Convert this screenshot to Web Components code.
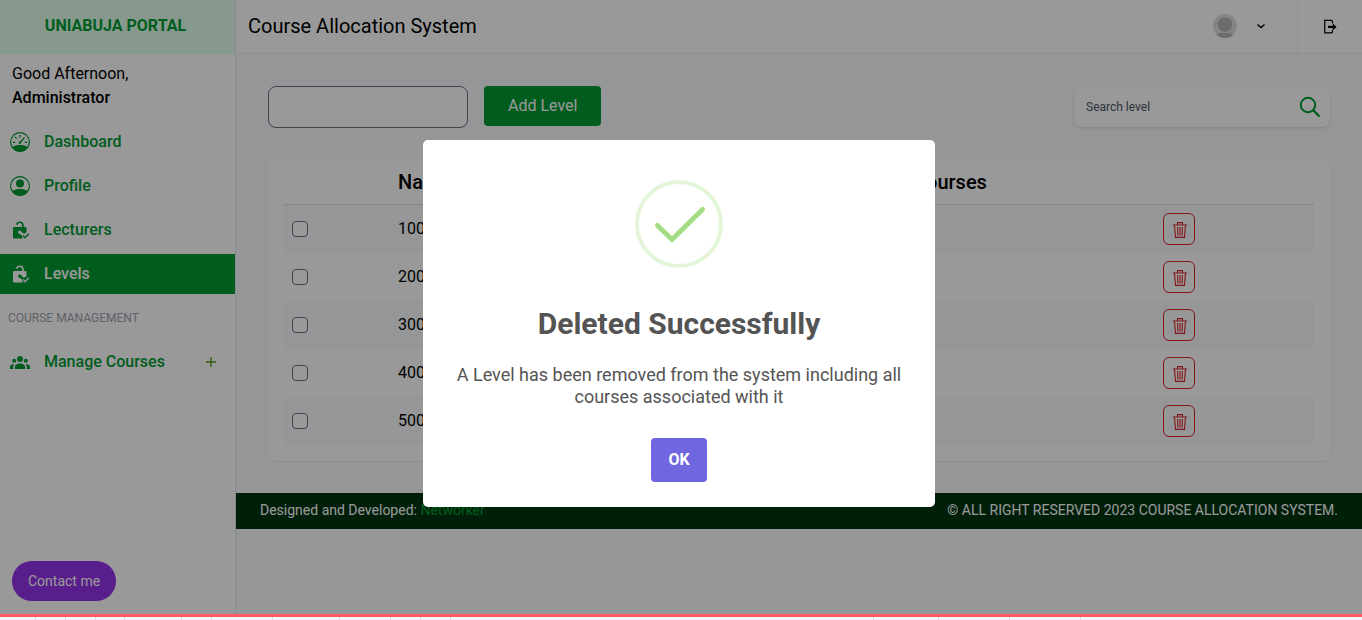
<!DOCTYPE html>
<html lang="en">
<head>
<meta charset="utf-8">
<title>Course Allocation System</title>
<style>
body { margin: 0; font-family: Roboto, "Liberation Sans", sans-serif; font-size: 16px; line-height: 24px; color: #000; }
</style>
</head>
<body>
<portal-app></portal-app>
<script>
const define = (name, html, setup) => {
  const template = document.createElement('template');
  template.innerHTML = `<style>*{box-sizing:border-box}:host{display:block;box-sizing:border-box}button,input{font:inherit}</style>${html}`;
  customElements.define(name, class extends HTMLElement {
    connectedCallback() {
      if (this.shadowRoot) return;
      this.attachShadow({ mode: 'open' }).append(template.content.cloneNode(true));
      if (setup) setup(this, this.shadowRoot);
    }
  });
};

const icons = {
  dashboard: ['0 0 20 20', '<circle cx="10" cy="10" r="9.4" fill="none" stroke="currentColor" stroke-width="1.2"/><path d="M2 15.200C4.500 13.600 7 13 10 13s5.500.6 8 2.200A9.500 9.500 0 0 1 10 19.800a9.500 9.500 0 0 1-8-4.600Z"/><path d="M10 3v2.400M5 5l1.600 1.600M2.800 10.300h2.500M14.700 10.300h2.500M9.800 11 14.600 5.400" fill="none" stroke="currentColor" stroke-width="1.300"/><circle cx="9.800" cy="10.700" r="1.200"/>'],
  profile: ['0 0 20 20', '<circle cx="10" cy="10" r="9.400" fill="none" stroke="currentColor" stroke-width="1.200"/><circle cx="10" cy="7.500" r="4"/><path d="M2 15.200C4.500 13.600 7 13 10 13s5.500.6 8 2.200A9.500 9.500 0 0 1 10 19.800a9.500 9.500 0 0 1-8-4.600Z"/>'],
  lock: ['0 0 20 20', '<path d="M6.700 4.700A3.200 3.200 0 0 1 13 5.200V7.500" fill="none" stroke="currentColor" stroke-width="1.600"/><path d="M4.300 7h10.900a1.300 1.300 0 0 1 1.300 1.300v3.900l-2.500 1.500-2.400-1.700a1.800 1.800 0 1 0-1.700 2l1.900 1.300.2 1 .8 2.200H4.300A1.300 1.300 0 0 1 3 17.200V8.300A1.300 1.300 0 0 1 4.300 7Z"/><path d="m13 15.500 2 2.200 3.800-4" fill="none" stroke="currentColor" stroke-width="1.500"/>'],
  people: ['0 0 20 20', '<circle cx="10" cy="7" r="3"/><circle cx="4.200" cy="8.800" r="2"/><circle cx="15.800" cy="8.800" r="2"/><path d="M4.800 17v-1.700c0-2.700 2.300-3.900 5.200-3.900s5.200 1.200 5.200 3.900V17ZM0 17v-1.800c0-2 1.700-3.200 4.500-3.200-.9.900-1.300 2-1.300 3.300V17Zm20 0v-1.800c0-2-1.700-3.200-4.500-3.200.9.900 1.300 2 1.300 3.300V17Z"/>'],
  plus: ['0 0 20 20', '<path d="M10 5v10M5 10h10" fill="none" stroke="currentColor" stroke-width="1.300"/>'],
  avatar: ['0 0 24 24', '<defs><clipPath id="disc"><circle cx="12" cy="12" r="12"/></clipPath></defs><g clip-path="url(#disc)"><path fill="#dedede" d="M0 0h24v24H0z"/><circle cx="12" cy="10.500" r="7.300" fill="#b5b5b5"/><path fill="#b5b5b5" d="M3 24v-3c2-1.700 5-2 9-2s7 .3 9 2v3Z"/></g>'],
  chevron: ['0 0 12 12', '<path d="m2.500 4.500 3.500 3 3.500-3" fill="none" stroke="currentColor" stroke-width="1.400"/>'],
  logout: ['0 0 16 16', '<path d="M10.500 4.500V2.300l-1-.9H2.700v12.400h6.800l1-.9v-2.200" fill="none" stroke="currentColor" stroke-width="1.200"/><path d="M6 6.700h4.800V4.500L14.600 7.900l-3.800 3.300V9.100H6Z"/>'],
  search: ['0 0 24 24', '<circle cx="10" cy="10" r="7.200" fill="none" stroke="currentColor" stroke-width="2"/><path d="m15 15 6.500 6.500" stroke="currentColor" stroke-width="2.400"/>'],
  trash: ['0 0 14 16', '<path d="M0 3h14M4.500 3V.6h5V3M1.500 3.300l1 12.100h9l1-12.100M4.600 5l.3 8.500M7 5v8.500M9.400 5l-.3 8.500" fill="none" stroke="currentColor" stroke-width="1.100"/>']
};

define('app-icon', `<style>:host{flex:none;width:20px;height:20px}svg{display:block;width:100%;height:100%;fill:currentColor}</style><svg aria-hidden="true"></svg>`,
  (host, root) => {
    const [box, art] = icons[host.getAttribute('name')];
    const svg = root.querySelector('svg');
    svg.setAttribute('viewBox', box);
    svg.innerHTML = art;
  });

define('nav-link', `<style>
a{display:flex;align-items:center;gap:14px;height:40px;padding:0 14px 0 10px;color:#009c33;text-decoration:none;font-weight:500;line-height:24px}
span{flex:1;padding-bottom:1px}
:host([active]) a{background:#009c33;color:#fff}
</style><a href="#"><span><slot></slot></span><slot name="end"></slot></a>`,
  (host, root) => {
    const link = root.querySelector('a');
    const icon = document.createElement('app-icon');
    icon.setAttribute('name', host.getAttribute('icon'));
    link.prepend(icon);
    if (host.hasAttribute('active')) link.setAttribute('aria-current', 'page');
  });

define('app-sidebar', `<style>
:host{display:flex;flex-direction:column;background:#fff;border-right:1px solid #e2e8f0}
.brand{height:54px;display:grid;place-items:center;padding:0 4px 2px 0;background:#e0ffea;color:#009c33;font-weight:700}
.greet{padding:8px 12px 12px}
.greet strong{display:block;font-weight:500}
nav{display:grid;gap:4px}
h2{margin:0;height:40px;padding:0 8px;font-size:12px;line-height:40px;font-weight:400;color:#9ca3af}
button{margin:auto auto 13px 12px;height:40px;padding:0 16px;border:0;border-radius:20px;background:#9333ea;color:#fff;font-size:14px}
nav-link app-icon{color:#4a9c1a}
</style>
<div class="brand">UNIABUJA PORTAL</div>
<div class="greet">Good Afternoon,<strong>Administrator</strong></div>
<nav>
<nav-link icon="dashboard">Dashboard</nav-link>
<nav-link icon="profile">Profile</nav-link>
<nav-link icon="lock">Lecturers</nav-link>
<nav-link icon="lock" active>Levels</nav-link>
<h2>COURSE MANAGEMENT</h2>
<nav-link icon="people">Manage Courses<app-icon slot="end" name="plus"></app-icon></nav-link>
</nav>
<button type="button">Contact me</button>`);

define('app-header', `<style>
:host{display:flex;height:54px;background:#fff;border-bottom:1px solid #eef0f3}
h1{flex:1;margin:0;padding-left:12px;font-size:20px;font-weight:400;line-height:52px}
button{border:0;background:none;padding:0;display:flex;align-items:center;height:52px;color:#000}
.user{gap:18px;padding-right:30px}
.out{width:65px;justify-content:center;border-left:1px solid #eef0f3;height:53px}
.face{width:24px;height:24px}
.small{width:12px;height:12px}
.exit{width:16px;height:16px}
</style>
<h1>Course Allocation System</h1>
<button class="user" type="button" aria-label="Account"><app-icon class="face" name="avatar"></app-icon><app-icon class="small" name="chevron"></app-icon></button>
<button class="out" type="button" aria-label="Log out"><app-icon class="exit" name="logout"></app-icon></button>`);

define('level-tools', `<style>
:host{display:flex;justify-content:space-between;align-items:center;height:42px}
form{display:flex;gap:16px;align-items:flex-start}
.name{width:200px;height:42px;border:1px solid #6b7280;border-radius:8px;padding:0 12px;background:#fff}
.add{height:40px;padding:0 24px;border:0;border-radius:4px;background:#009c33;color:#fff}
.search{display:flex;align-items:center;width:256px;height:40px;border-radius:8px;background:#fff;box-shadow:0 1px 3px rgba(0,0,0,.12);padding:0 8px 0 12px}
.search input{flex:1;min-width:0;border:0;padding:0;background:none;font-size:12px}
.search input::placeholder{color:#4b5563;opacity:1}
.search app-icon{width:24px;height:24px;color:#009c33}
</style>
<form><input class="name" type="text" aria-label="Level name"><button class="add" type="button">Add Level</button></form>
<label class="search"><input type="text" placeholder="Search level" aria-label="Search level"><app-icon name="search"></app-icon></label>`);

define('level-table', `<style>
:host{background:#fff;border-radius:8px;padding:0 16px 16px;box-shadow:0 1px 2px rgba(0,0,0,.05)}
table{width:100%;border-collapse:separate;border-spacing:0;table-layout:fixed}
th{height:45px;padding:0 8px;border-bottom:1px solid #d9dfe7;font-size:20px;font-weight:500;text-align:left}
td{height:48px;padding:0 8px;vertical-align:middle}
tbody tr:nth-child(odd){background:#f8fafc}
.check{width:106px}.count{width:250px}.act{width:159px}
input{appearance:none;display:block;width:16px;height:16px;margin:0;border:1px solid #6b7280;border-radius:4px;background:#fff}
button{display:grid;place-items:center;width:32px;height:32px;padding:2px 0 0 2px;border:1px solid #dc2626;border-radius:6px;background:transparent;color:#dc2626}
button app-icon{width:14px;height:16px}
</style>
<table><thead><tr><th class="check"></th><th>Name</th><th class="count">Courses</th><th class="act"></th></tr></thead><tbody></tbody></table>`,
  (host, root) => {
    root.querySelector('tbody').innerHTML = [100, 200, 300, 400, 500].map(n =>
      `<tr><td><input type="checkbox" aria-label="Select ${n}"></td><td>${n}</td><td></td><td><button type="button" aria-label="Delete ${n}"><app-icon name="trash"></app-icon></button></td></tr>`).join('');
  });

define('app-footer', `<style>
:host{display:flex;justify-content:space-between;align-items:center;height:36px;padding:0 24px 2px;background:#003410;color:#fff;font-size:14px;line-height:20px}
a{color:#009c33;text-decoration:none}
</style><span>Designed and Developed: <a href="#">Networker</a></span><span>© ALL RIGHT RESERVED 2023 COURSE ALLOCATION SYSTEM.</span>`);

define('success-dialog', `<style>
:host{display:flex;justify-content:center;align-items:flex-start;padding:140px 4px 0 0;background:rgba(0,0,0,.4)}
dialog{position:static;margin:0;width:512px;max-width:100%;padding:40px 24px 25px;border:0;border-radius:5px;background:#fff;color:#545454;text-align:center}
svg{display:block;margin:0 auto 38px;width:88px;height:88px}
h2{margin:0 0 22px;font-size:30px;line-height:36px;font-weight:700}
p{margin:0 0 30px;font-size:18px;line-height:22px}
button{height:44px;padding:0 17px;border:0;border-radius:4px;background:#7066e0;color:#fff;font-weight:700;display:block;margin:0 auto}
</style>
<dialog open aria-labelledby="title">
<svg viewBox="0 0 88 88" fill="none" aria-hidden="true"><circle cx="44" cy="44" r="42" stroke="#e4f6da" stroke-width="4"/><path d="M22.500 45.500 37 59.500 67.500 29.500" stroke="#a5dc86" stroke-width="5" stroke-linecap="round" stroke-linejoin="round"/></svg>
<h2 id="title">Deleted Successfully</h2>
<p>A Level has been removed from the system including all courses associated with it</p>
<button type="button">OK</button>
</dialog>`);

define('bottom-strip', `<style>
:host{display:grid;grid-template-columns:36px 30px 30px 29px 57px 30px 61px 67px 51px 30px 30px 1fr 65px 71px 71px 281px;height:6px;border-top:3px solid #ff5a65;background:#f8f8f8}
i{border-right:1px solid #ddd}
i:last-child{border:0}
</style>${'<i></i>'.repeat(16)}`);

define('portal-app', `<style>
:host{display:grid;grid-template-rows:1fr auto;min-height:100vh}
.frame{display:grid;grid-template-columns:236px 1fr;position:relative;background:#f8fafc}
main{padding:32px}
level-table{margin-top:32px}
success-dialog{position:absolute;inset:0}
</style>
<div class="frame">
<app-sidebar></app-sidebar>
<div><app-header></app-header><main><level-tools></level-tools><level-table></level-table></main><app-footer></app-footer></div>
<success-dialog></success-dialog>
</div>
<bottom-strip></bottom-strip>`);
</script>
</body>
</html>
